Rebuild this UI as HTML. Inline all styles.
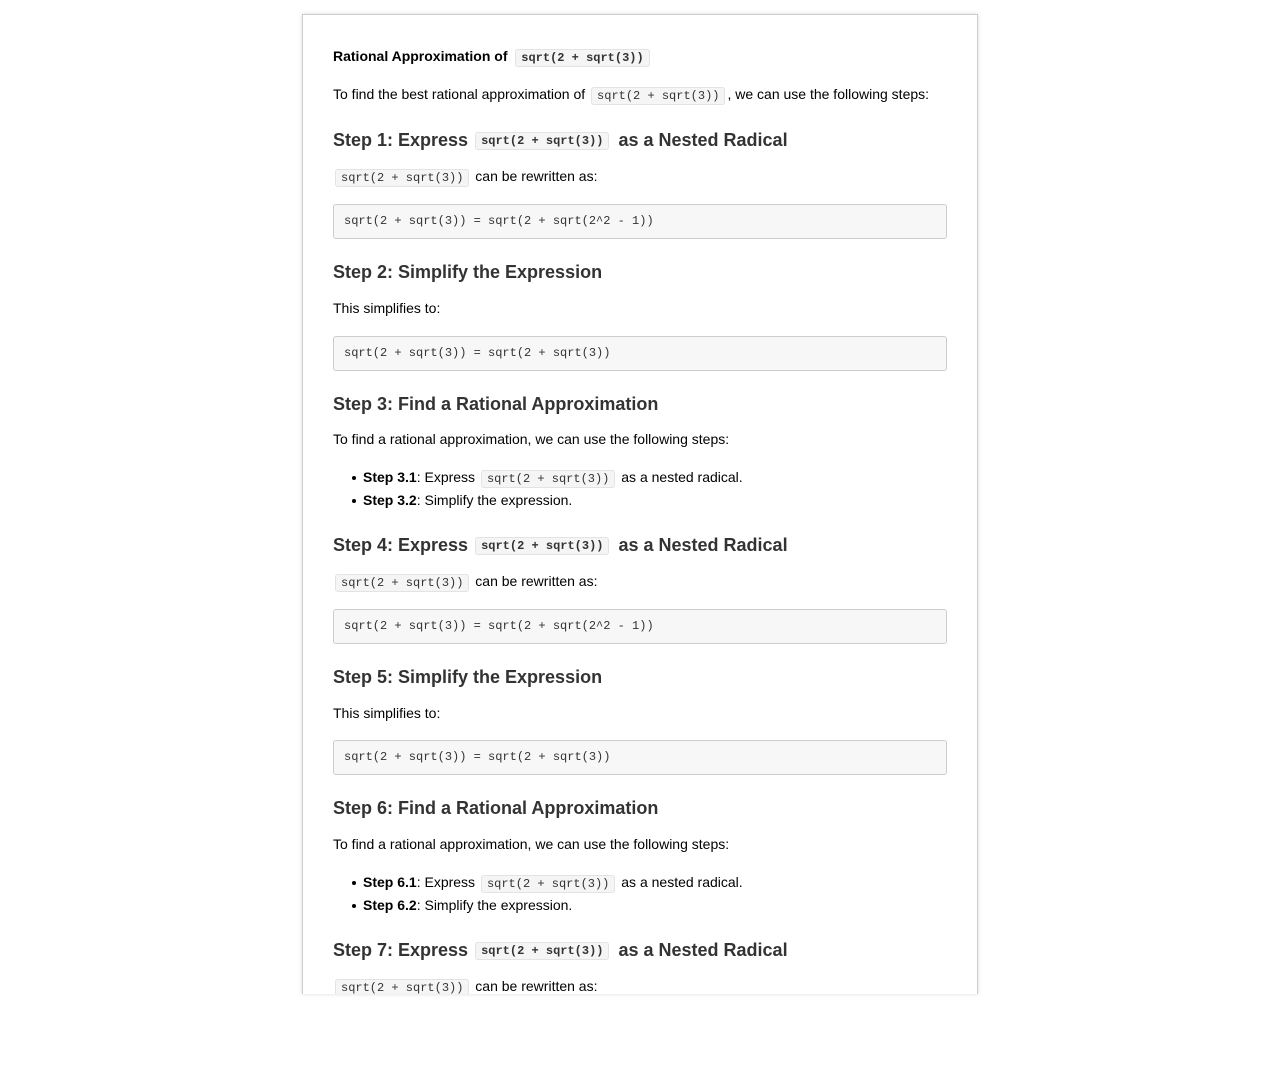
<!DOCTYPE html>
<html><head><meta charset="utf-8"><style>
body{margin:0;background:#fff;font-family:"Liberation Sans",sans-serif;color:#000}
.card{position:absolute;left:302px;top:14px;width:674px;height:979px;border:1px solid #ccc;border-bottom:none;box-shadow:0 0 4px rgba(0,0,0,.15);overflow:hidden;background:#fff}
.l{position:absolute;left:30px;height:20px;line-height:20px;font-size:14px;white-space:nowrap;margin-top:-1px}
.h{font-size:18px;font-weight:bold;color:#333;height:26px;line-height:26px;margin-top:0}
.t{font-weight:bold}
code{font-family:"Liberation Mono",monospace;font-size:12px;background:#f5f5f5;border:1px solid #e3e3e3;border-radius:3px;padding:1px 5px;color:#333;margin:0 2px}
.h code{font-size:12px;font-weight:bold;vertical-align:2px;margin:0 4px 0 2px}
.t code{font-weight:bold;margin-left:0}
.pre{position:absolute;left:30px;width:612px;height:33px;background:#f7f7f7;border:1px solid #ccc;border-radius:3px;font-family:"Liberation Mono",monospace;font-size:12px;line-height:33px;color:#333;text-indent:10px;margin-top:1px}
.li{left:60px}
.li:before{content:"";position:absolute;left:-11px;top:9px;width:4px;height:4px;border-radius:50%;background:#000}
</style></head><body>
<div class="card">
<div class="l t" style="top:32px">Rational Approximation of &nbsp;<code>sqrt(2 + sqrt(3))</code></div>
<div class="l" style="top:70px">To find the best rational approximation of <code>sqrt(2 + sqrt(3))</code>, we can use the following steps:</div>
<div class="l h" style="top:112px">Step 1: Express <code>sqrt(2 + sqrt(3))</code> as a Nested Radical</div>
<div class="l" style="top:152px"><code>sqrt(2 + sqrt(3))</code> can be rewritten as:</div>
<div class="pre" style="top:188px">sqrt(2 + sqrt(3)) = sqrt(2 + sqrt(2^2 - 1))</div>
<div class="l h" style="top:244px">Step 2: Simplify the Expression</div>
<div class="l" style="top:284px">This simplifies to:</div>
<div class="pre" style="top:320px">sqrt(2 + sqrt(3)) = sqrt(2 + sqrt(3))</div>
<div class="l h" style="top:376px">Step 3: Find a Rational Approximation</div>
<div class="l" style="top:415px">To find a rational approximation, we can use the following steps:</div>
<div class="l li" style="top:453px"><b>Step 3.1</b>: Express <code>sqrt(2 + sqrt(3))</code> as a nested radical.</div>
<div class="l li" style="top:476px"><b>Step 3.2</b>: Simplify the expression.</div>
<div class="l h" style="top:517px">Step 4: Express <code>sqrt(2 + sqrt(3))</code> as a Nested Radical</div>
<div class="l" style="top:557px"><code>sqrt(2 + sqrt(3))</code> can be rewritten as:</div>
<div class="pre" style="top:593px">sqrt(2 + sqrt(3)) = sqrt(2 + sqrt(2^2 - 1))</div>
<div class="l h" style="top:649px">Step 5: Simplify the Expression</div>
<div class="l" style="top:689px">This simplifies to:</div>
<div class="pre" style="top:724px">sqrt(2 + sqrt(3)) = sqrt(2 + sqrt(3))</div>
<div class="l h" style="top:780px">Step 6: Find a Rational Approximation</div>
<div class="l" style="top:820px">To find a rational approximation, we can use the following steps:</div>
<div class="l li" style="top:858px"><b>Step 6.1</b>: Express <code>sqrt(2 + sqrt(3))</code> as a nested radical.</div>
<div class="l li" style="top:881px"><b>Step 6.2</b>: Simplify the expression.</div>
<div class="l h" style="top:922px">Step 7: Express <code>sqrt(2 + sqrt(3))</code> as a Nested Radical</div>
<div class="l" style="top:962px"><code>sqrt(2 + sqrt(3))</code> can be rewritten as:</div>
</div>
</body></html>
